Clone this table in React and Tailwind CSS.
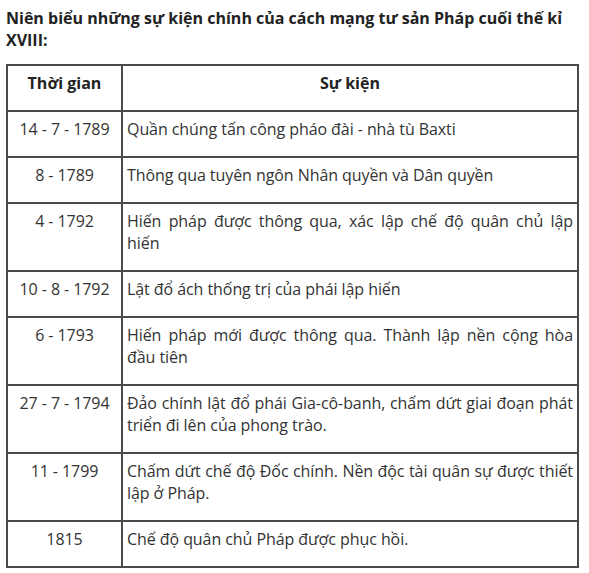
const rows = [
  ["14 - 7 - 1789", "Quần chúng tấn công pháo đài - nhà tù Baxti"],
  ["8 - 1789", "Thông qua tuyên ngôn Nhân quyền và Dân quyền"],
  ["4 - 1792", "Hiến pháp được thông qua, xác lập chế độ quân chủ lập hiến"],
  ["10 - 8 - 1792", "Lật đổ ách thống trị của phái lập hiến"],
  ["6 - 1793", "Hiến pháp mới được thông qua. Thành lập nền cộng hòa đầu tiên"],
  ["27 - 7 - 1794", "Đảo chính lật đổ phái Gia-cô-banh, chấm dứt giai đoạn phát triển đi lên của phong trào."],
  ["11 - 1799", "Chấm dứt chế độ Đốc chính. Nền độc tài quân sự được thiết lập ở Pháp."],
  ["1815", "Chế độ quân chủ Pháp được phục hồi."],
];

export default function App() {
  return (
    <div
      className="bg-white px-[6px] pt-[7px] text-[16px] leading-[22px] text-[#333]"
      style={{ fontFamily: '"Open Sans", "Noto Sans", sans-serif' }}
    >
      <p className="font-bold text-[#222]">
        Niên biểu những sự kiện chính của cách mạng tư sản Pháp cuối thế kỉ XVIII:
      </p>
      <table className="mt-[13px] w-[573px] border-collapse border-2 border-[#4a4a4a]">
        <thead>
          <tr>
            <th className="w-[115px] border-2 border-[#4a4a4a] px-[5px] pt-[6px] pb-[16px] text-center align-top font-bold text-[#222]">
              Thời gian
            </th>
            <th className="border-2 border-[#4a4a4a] px-[5px] pt-[6px] pb-[16px] text-center align-top font-bold text-[#222]">
              Sự kiện
            </th>
          </tr>
        </thead>
        <tbody>
          {rows.map(([time, event]) => (
            <tr key={time}>
              <td className="border-2 border-[#4a4a4a] px-[5px] pt-[6px] pb-[16px] text-center align-top whitespace-nowrap tracking-[-0.07px]">
                {time}
              </td>
              <td className="border-2 border-[#4a4a4a] pl-[4px] pr-[4px] pt-[6px] pb-[16px] text-justify align-top tracking-[-0.07px]">
                {event}
              </td>
            </tr>
          ))}
        </tbody>
      </table>
    </div>
  );
}
